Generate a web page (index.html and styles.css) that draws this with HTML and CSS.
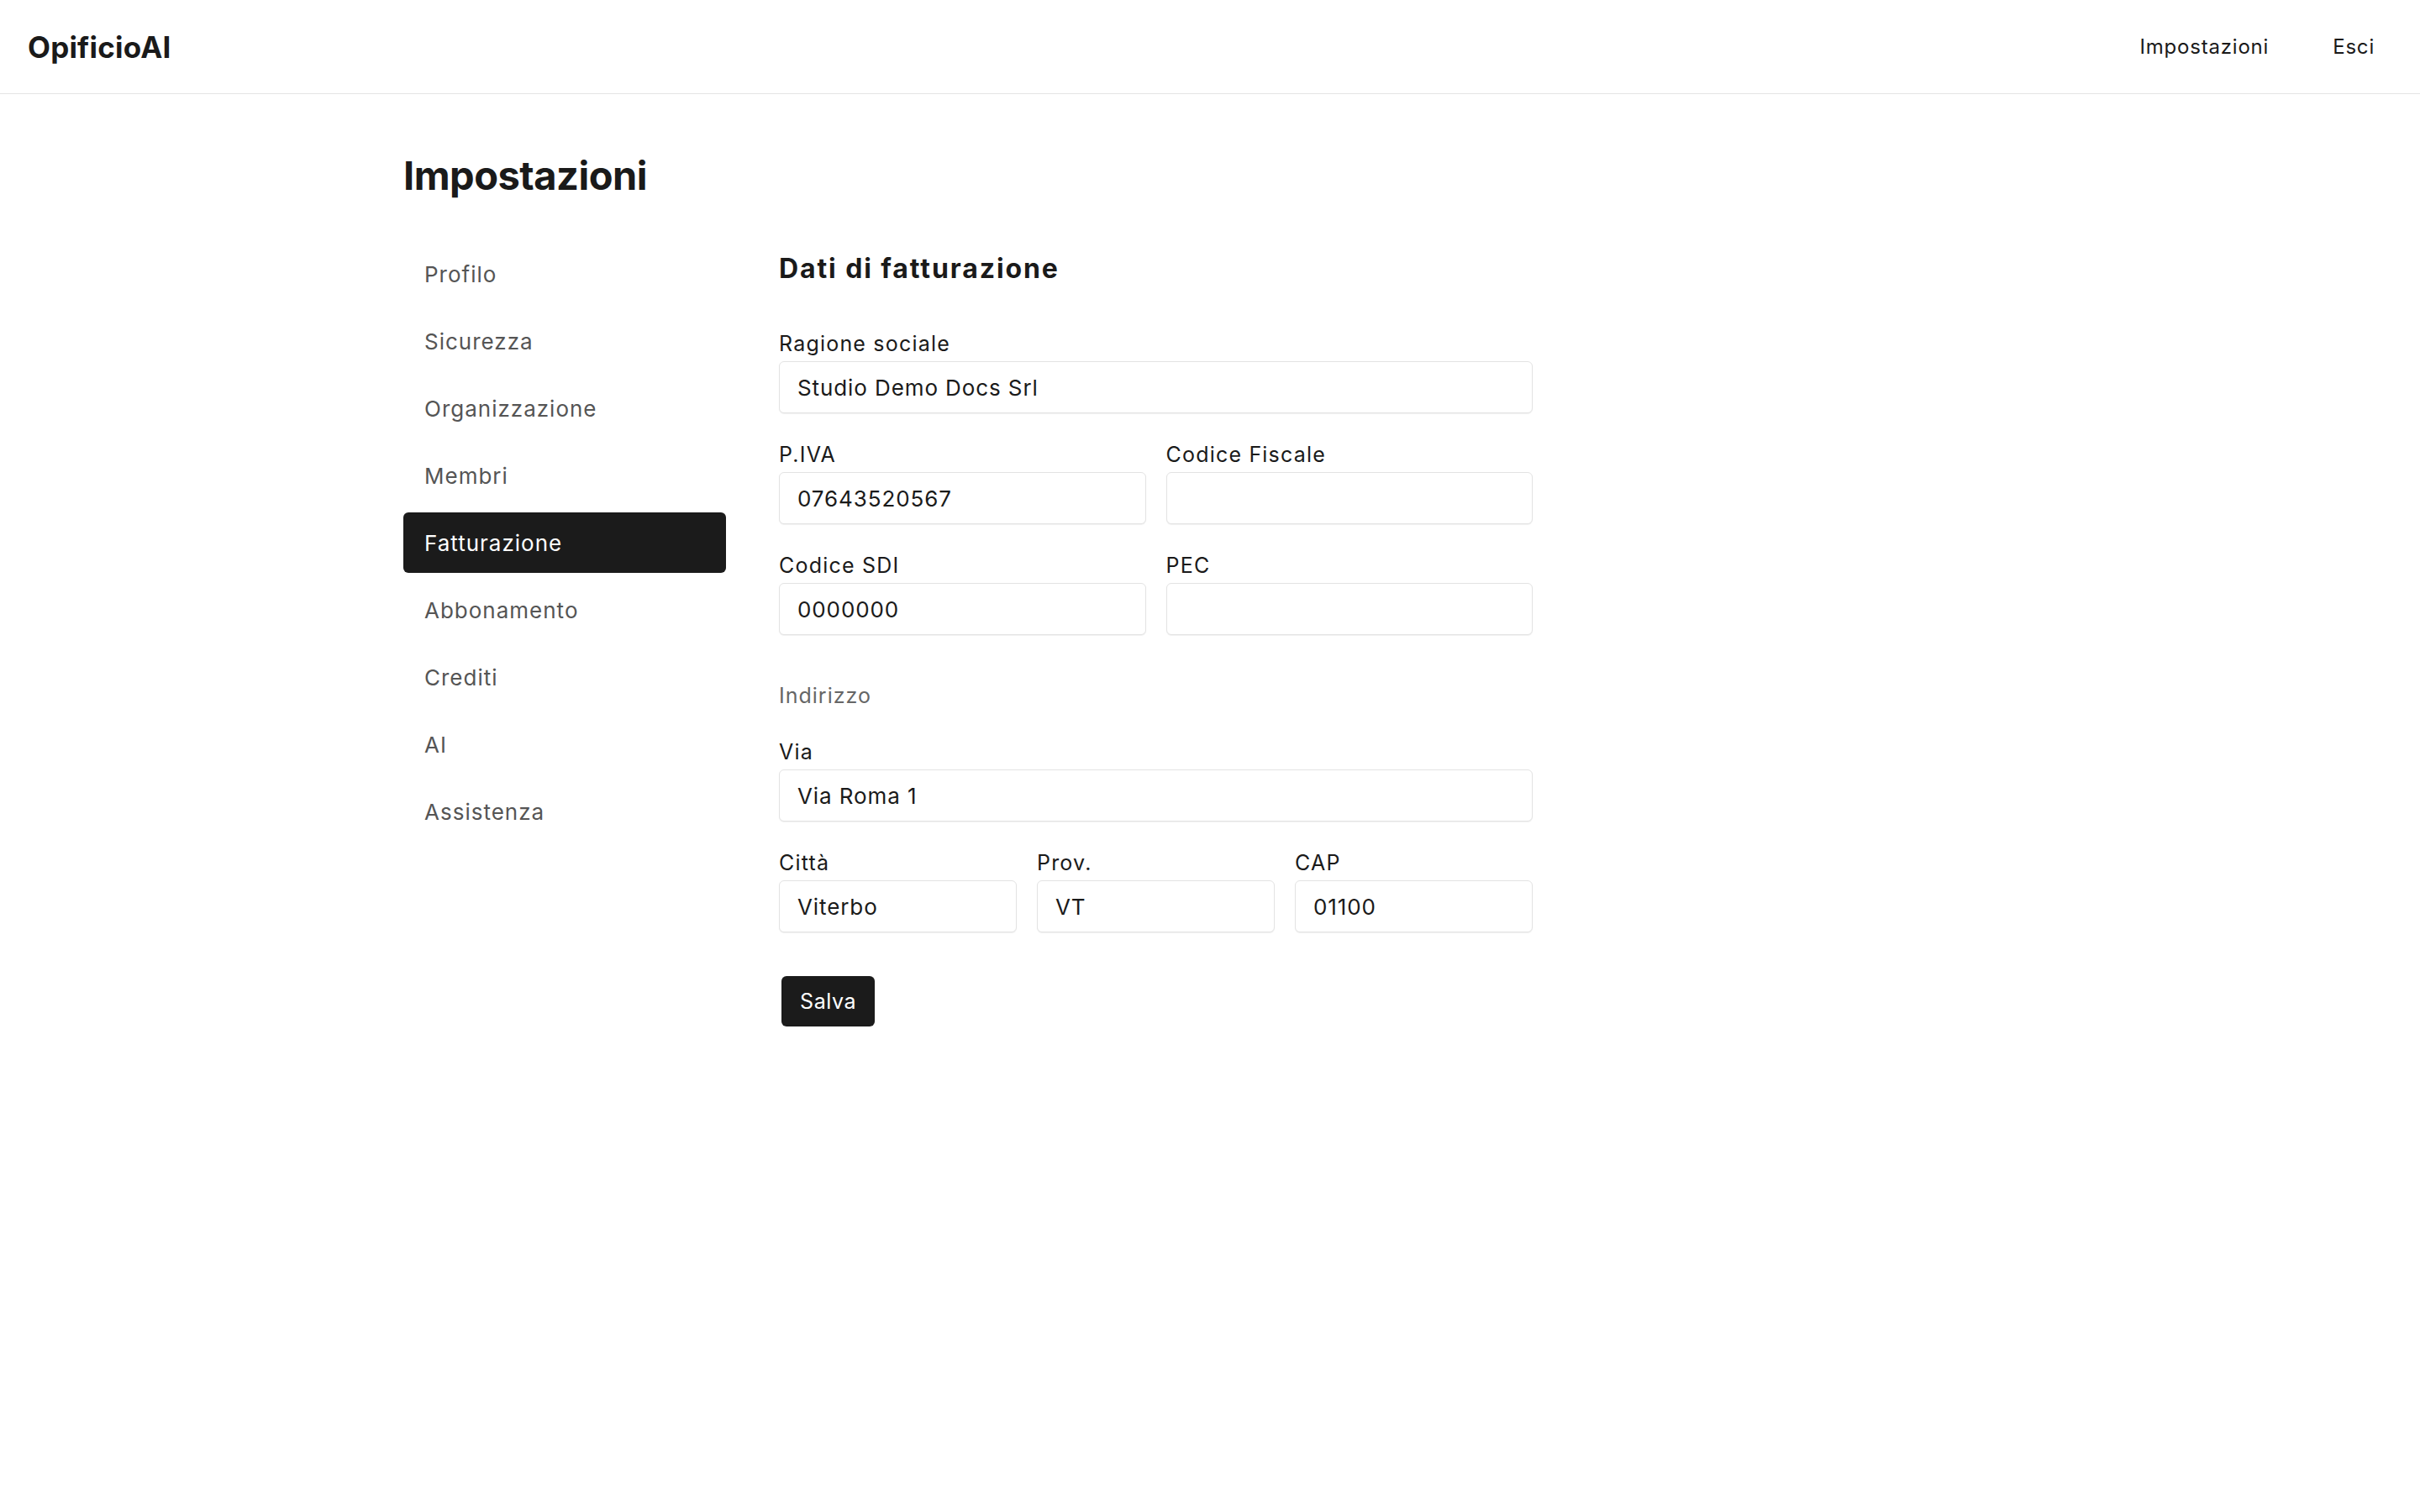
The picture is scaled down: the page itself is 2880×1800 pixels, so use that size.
FILE: index.html
```html
<!DOCTYPE html>
<html lang="it">

	<head>
		<meta charset="UTF-8" />
		<meta name="viewport" content="width=device-width, initial-scale=1.0" />
		<title>Impostazioni - OpificioAI</title>
		<link rel="stylesheet" href="styles.css">
	</head>

	<body>
		<header class="topbar">
			<a class="logo" href="#">OpificioAI</a>
			<nav class="topnav">
				<a href="#">Impostazioni</a>
				<a href="#">Esci</a>
			</nav>
		</header>

		<main class="page">
			<h1 class="page-title">Impostazioni</h1>

			<div class="settings">
				<ul class="side-menu">
					<li><a href="#">Profilo</a></li>
					<li><a href="#">Sicurezza</a></li>
					<li><a href="#">Organizzazione</a></li>
					<li><a href="#">Membri</a></li>
					<li><a href="#" class="active">Fatturazione</a></li>
					<li><a href="#">Abbonamento</a></li>
					<li><a href="#">Crediti</a></li>
					<li><a href="#">AI</a></li>
					<li><a href="#">Assistenza</a></li>
				</ul>

				<form class="billing" onsubmit="return false">
					<h2 class="section-title">Dati di fatturazione</h2>

					<div class="field">
						<label for="ragione">Ragione sociale</label>
						<input id="ragione" type="text" value="Studio Demo Docs Srl">
					</div>

					<div class="row two">
						<div class="field">
							<label for="piva">P.IVA</label>
							<input id="piva" type="text" value="07643520567">
						</div>
						<div class="field">
							<label for="cf">Codice Fiscale</label>
							<input id="cf" type="text" value="">
						</div>
					</div>

					<div class="row two">
						<div class="field">
							<label for="sdi">Codice SDI</label>
							<input id="sdi" type="text" value="0000000">
						</div>
						<div class="field">
							<label for="pec">PEC</label>
							<input id="pec" type="text" value="">
						</div>
					</div>

					<p class="subhead">Indirizzo</p>

					<div class="field">
						<label for="via">Via</label>
						<input id="via" type="text" value="Via Roma 1">
					</div>

					<div class="row three">
						<div class="field">
							<label for="citta">Città</label>
							<input id="citta" type="text" value="Viterbo">
						</div>
						<div class="field">
							<label for="prov">Prov.</label>
							<input id="prov" type="text" value="VT">
						</div>
						<div class="field">
							<label for="cap">CAP</label>
							<input id="cap" type="text" value="01100">
						</div>
					</div>

					<button class="btn-save" type="submit">Salva</button>
				</form>
			</div>
		</main>
	</body>

</html>
```

FILE: styles.css
```css
* {
	box-sizing: border-box;
}

body {
	margin: 0;
	font-family: "Inter", "Liberation Sans", sans-serif;
	color: #1a1a1a;
	background: #fff;
}

a {
	color: inherit;
	text-decoration: none;
}

/* top bar */
.topbar {
	height: 112px;
	display: flex;
	align-items: center;
	justify-content: space-between;
	padding: 0 54px 0 33px;
	border-bottom: 1px solid #e5e5e5;
}

.logo {
	font-size: 35px;
	font-weight: 700;
	letter-spacing: 0.2px;
}

.topnav {
	display: flex;
	gap: 76px;
	font-size: 24px;
	letter-spacing: 0.8px;
}

/* page */
.page {
	width: 1920px;
	margin: 0 auto;
	padding-top: 68px;
}

.page-title {
	margin: 0;
	font-size: 47px;
	line-height: 58px;
	font-weight: 700;
	letter-spacing: -0.5px;
}

.settings {
	display: flex;
	gap: 63px;
	margin-top: 52px;
}

.side-menu {
	list-style: none;
	margin: 0;
	padding: 0;
	width: 384px;
	flex: none;
	display: flex;
	flex-direction: column;
	gap: 8px;
}

.side-menu a {
	display: flex;
	align-items: center;
	height: 72px;
	padding-left: 25px;
	border-radius: 6px;
	font-size: 26px;
	letter-spacing: 1px;
	color: #555;
}

.side-menu a.active {
	background: #1b1b1b;
	color: #fff;
}

/* form */
.billing {
	width: 897px;
	padding-top: 11px;
}

.section-title {
	margin: 0 0 52px;
	font-size: 32px;
	line-height: 38px;
	font-weight: 700;
	letter-spacing: 1.9px;
}

.field {
	margin-bottom: 31px;
}

.field label {
	display: block;
	font-size: 25px;
	line-height: 36px;
	letter-spacing: 1.2px;
	margin-bottom: 3px;
}

.field input {
	display: block;
	width: 100%;
	height: 62px;
	padding: 0 21px;
	border: 1px solid #e3e3e3;
	border-radius: 6px;
	box-shadow: 0 1px 1px rgba(0, 0, 0, 0.06);
	font: inherit;
	font-size: 26px;
	letter-spacing: 0.9px;
	color: #1a1a1a;
	background: #fff;
	outline: none;
}

.row {
	display: grid;
	gap: 0 24px;
}

.row.two {
	grid-template-columns: 1fr 1fr;
}

.row.three {
	grid-template-columns: 1fr 1fr 1fr;
}

.subhead {
	margin: 23px 0 31px;
	font-size: 25px;
	line-height: 36px;
	letter-spacing: 1px;
	color: #666;
}

.btn-save {
	margin-top: 21px;
	margin-left: 3px;
	height: 60px;
	padding: 0 22px;
	border: none;
	border-radius: 6px;
	background: #1b1b1b;
	color: #fff;
	font: inherit;
	font-size: 25px;
	letter-spacing: 0.6px;
	cursor: pointer;
}
```
